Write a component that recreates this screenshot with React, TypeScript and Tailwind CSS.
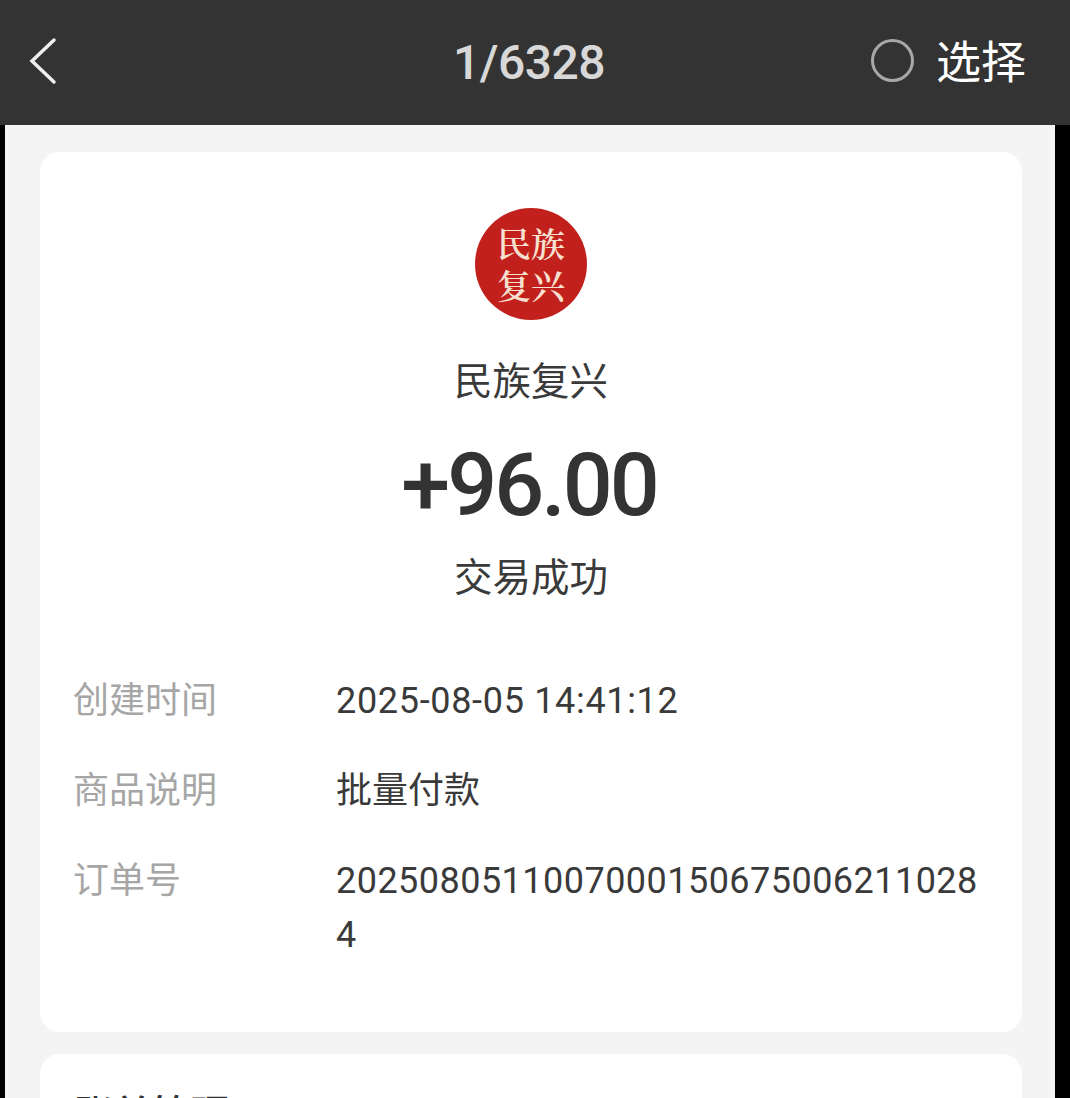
const rows = [
  { label: '创建时间', value: '2025-08-05 14:41:12', valueClass: 'tracking-[0.68px]' },
  { label: '商品说明', value: '批量付款', valueClass: '' },
  { label: '订单号', value: '20250805110070001506750062110284', valueClass: 'tracking-[0.47px]' },
];

export default function App() {
  return (
    <div className="h-[1098px] overflow-hidden bg-black font-['Roboto','Noto_Sans_CJK_SC',sans-serif]">
      <header className="flex h-[125px] items-center bg-[#333333] pl-[32px] pr-[44px]">
        <div className="flex flex-1 items-center">
          <svg width="28" height="48" viewBox="0 0 28 48" fill="none" className="-ml-[3px] -mt-[3px]">
            <polyline points="25,3 3,24 25,45" stroke="#efefef" strokeWidth="3.5" strokeLinecap="round" strokeLinejoin="miter" />
          </svg>
        </div>
        <div className="text-[48px] font-medium leading-none tracking-[-0.5px] text-[#d8d8d8]">1/6328</div>
        <div className="flex flex-1 items-center justify-end gap-[22px]">
          <div className="-mt-[4px] h-[43px] w-[43px] rounded-full border-[3px] border-[#a8a8a8]" />
          <span className="pt-[2px] text-[45px] leading-none text-white">选择</span>
        </div>
      </header>

      <main className="ml-[5px] mr-[15px] h-[973px] bg-[#f4f4f4] pl-[35px] pr-[33px] pt-[27px]">
        <section className="flex h-[880px] flex-col items-center rounded-[20px] bg-white px-[34px] pt-[56px]">
          <div className="flex h-[112px] w-[112px] flex-col items-center justify-center rounded-full bg-[#c2201c] font-['Noto_Serif_CJK_SC','Noto_Sans_CJK_SC',serif] text-[34px] font-semibold leading-[42px] text-[#f8e0d0]">
            <span>民族</span>
            <span>复兴</span>
          </div>
          <div className="mt-[38px] text-[38.5px] leading-[48px] text-[#3a3a3a]">民族复兴</div>
          <div className="mt-[29px] pr-[4px] text-[88px] font-medium leading-[100px] tracking-[-3px] text-[#333333]">+96.00</div>
          <div className="mt-[19px] text-[38.5px] leading-[48px] text-[#3a3a3a]">交易成功</div>
          <div className="mt-[72px] flex w-full flex-col gap-[36px]">
            {rows.map((row) => (
              <div key={row.label} className="flex text-[36px] leading-[54px]">
                <div className="-ml-[1px] w-[263px] shrink-0 text-[#a6a6a6]">{row.label}</div>
                <div className={`break-all text-[#3a3a3a] ${row.valueClass}`}>{row.value}</div>
              </div>
            ))}
          </div>
        </section>
        <section className="mt-[22px] h-[100px] rounded-[20px] bg-white px-[34px] pt-[34px] text-[39px] font-medium leading-[54px] text-[#333333]">
          账单管理
        </section>
      </main>
    </div>
  );
}
